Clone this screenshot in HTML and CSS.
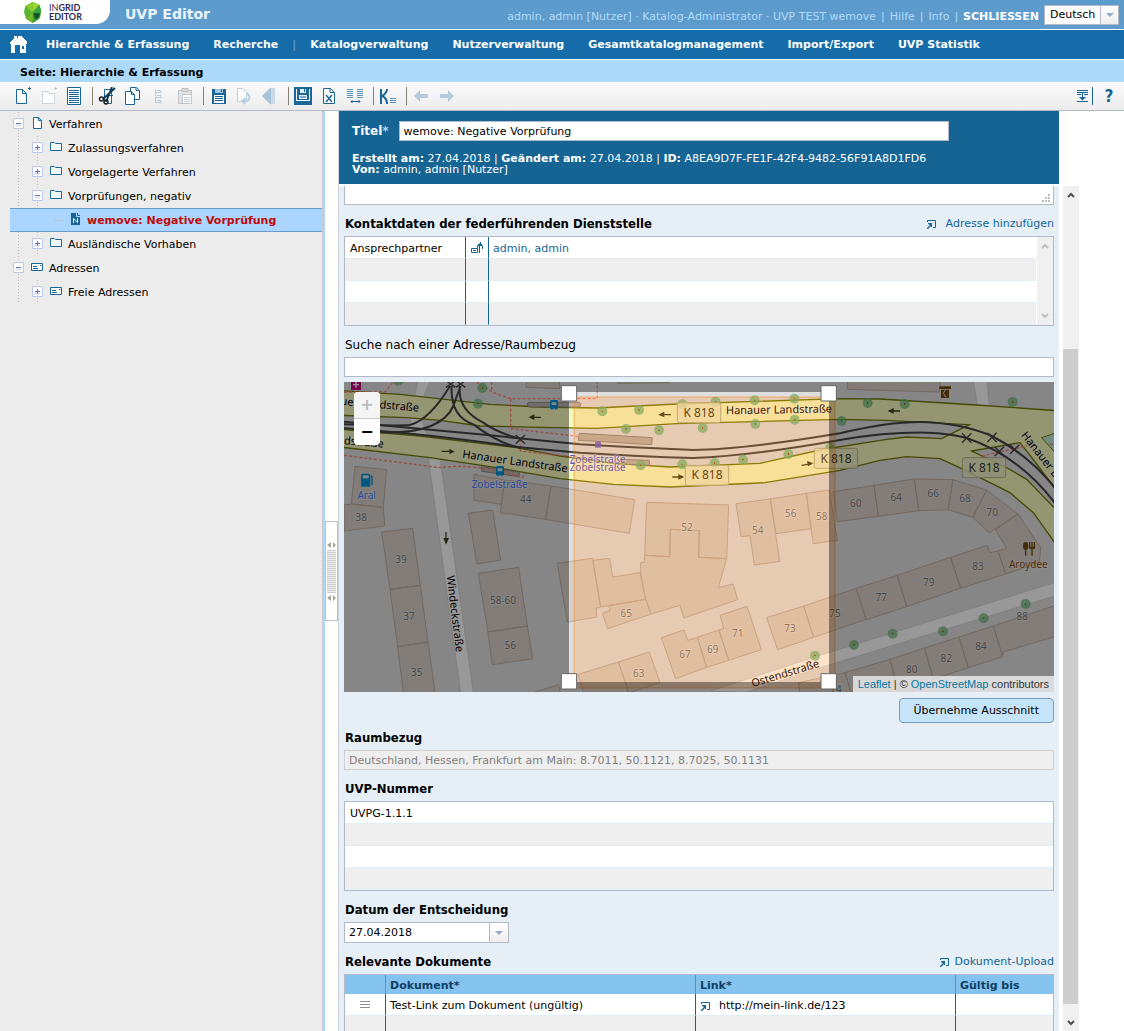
FILE: index.html
```html
<!DOCTYPE html>
<html lang="de">
<head>
<meta charset="utf-8">
<title>UVP Editor</title>
<meta name="viewport" content="width=device-width, initial-scale=1">
<link rel="stylesheet" href="styles.css">
</head>
<body>
<svg class="defs" aria-hidden="true">
  <symbol id="i-folder" viewBox="0 0 12 10"><path d="M.5 8.500v-8h4l1 1h6v7z" fill="#f3f6fa" stroke="#1a6699"/></symbol>
  <symbol id="i-card" viewBox="0 0 12 8"><path d="M.5.5h11v7h-11z" fill="#fff" stroke="#1a6699"/><path d="M2 3.500h4M2 5.500h5M9 2.500h1.500" stroke="#1a6699"/></symbol>
  <symbol id="i-popup" viewBox="0 0 10 10"><path d="M1.500 3V1.500h8v7H7" fill="none" stroke="#156494"/><path d="M2 4h4v4H5V7L2 10 .5 9.500 4 6 2 5z" fill="#156494"/></symbol>
  <symbol id="i-plus" viewBox="0 0 11 11"><path d="M.5.5h10v10H.5z" fill="#fff" stroke="#bcc8e0"/><path d="M2 6h7v3H2z" fill="#e6eaf4"/><path d="M3 5.500h5M5.500 3v5" stroke="#5b7fb5"/></symbol>
  <symbol id="i-minus" viewBox="0 0 11 11"><path d="M.5.5h10v10H.5z" fill="#fff" stroke="#bcc8e0"/><path d="M2 6h7v3H2z" fill="#e6eaf4"/><path d="M3 5.500h5" stroke="#5b7fb5"/></symbol>
  <symbol id="i-down" viewBox="0 0 8 4"><path d="M0 0h8L4 4z" fill="#93a9cc"/></symbol>
  <symbol id="i-up-arrow" viewBox="0 0 8 6"><path d="M1 5l3-3 3 3" fill="none" stroke="currentColor" stroke-width="2"/></symbol>
  <symbol id="i-down-arrow" viewBox="0 0 8 6"><path d="M1 1l3 3 3-3" fill="none" stroke="currentColor" stroke-width="2"/></symbol>
  <symbol id="i-split" viewBox="0 0 9 6"><path d="M4 0v6L0 3zM6 0v6l3-3z" fill="#a8a498"/></symbol>
</svg>

<header class="masthead">
  <a class="logo" href="#" aria-label="INGRID EDITOR">
    <svg width="17" height="21" viewBox="0 0 51 63" aria-hidden="true"><path d="M26 0L46 8 51 24 49 46 26 63 6 50 0 30 4 12z" fill="#5cb531"/><path d="M26 0L46 8 26 31z" fill="#9ed22c"/><path d="M4 12L26 0v31z" fill="#8bcb2e"/><path d="M46 8L51 24 50 34 26 31z" fill="#35a541"/><path d="M26 31h24l-4 20-20 12z" fill="#3a9a3c"/><path d="M6 50l20-19v32z" fill="#76b729"/><path d="M28 34h20l-5 14-9 3z" fill="#124f2c"/></svg>
    <span class="logo-text"><span>IN<b>GRID</b></span><b>EDITOR</b></span>
  </a>
  <h1>UVP Editor</h1>
  <div class="session">
    <span>admin, admin [Nutzer] · Katalog-Administrator · UVP TEST wemove</span>
    <span>|</span><a href="#">Hilfe</a><span>|</span><a href="#">Info</a><span>|</span><a class="close" href="#">SCHLIESSEN</a>
  </div>
  <div class="language">
    <select aria-label="Sprache"><option>Deutsch</option></select>
    <span class="arrow"><svg width="8" height="4"><use href="#i-down"/></svg></span>
  </div>
</header>

<nav class="mainnav">
  <a class="home" href="#" aria-label="Startseite"><svg width="18" height="19" viewBox="0 0 18 19" shape-rendering="crispEdges"><path fill="#fff" d="M4 1h3v2h1V1h4v1l5 5v2h-1v9h-4v-8H5v8H1V9H0V7l4-4z"/><path fill="#fff" d="M10 9h6v9h-6z"/><path fill="#156ca9" d="M12 11h2v3h-2z"/></svg></a>
  <a href="#">Hierarchie &amp; Erfassung</a>
  <a href="#">Recherche</a>
  <span class="bar">|</span>
  <a href="#">Katalogverwaltung</a>
  <a href="#">Nutzerverwaltung</a>
  <a href="#">Gesamtkatalogmanagement</a>
  <a href="#">Import/Export</a>
  <a href="#">UVP Statistik</a>
</nav>
<div class="crumb">Seite: Hierarchie &amp; Erfassung</div>

<div class="toolbar">
  <button aria-label="Neu"><svg width="18" height="18"><path d="M3.500 2.500h6l4 4v10h-10zM9.500 2.500v4h4" fill="#fff" stroke="#1a6699"/><path d="M16.500 0v3M15 1.500h3" stroke="#1a6699"/></svg></button>
  <button aria-label="Neuer Ordner" disabled><svg width="18" height="18"><path d="M3.500 4.500h6l1 2h5v10h-12z" fill="#fff" stroke="#c8d6e0"/><path d="M16.500 0v3M15 1.500h3" stroke="#b9cddd"/></svg></button>
  <button aria-label="Vorschau"><svg width="18" height="18"><path d="M2.500.5h13v17h-13z" fill="#fff" stroke="#1a6699"/><path d="M4 3.500h10M4 5.500h10M4 7.500h10M4 9.500h10M4 11.500h10M4 13.500h10M4 15.500h10" stroke="#1a6699"/></svg></button>
  <i class="sep"></i>
  <button aria-label="Ausschneiden"><svg width="18" height="18"><path d="M6.500 2.500h7v14h-7zM9 8.500h6" fill="#fff" stroke="#1a6699"/><path d="M17 1L5 12M14 0L8 15" stroke="#103c5c" stroke-width="2"/><circle cx="3.500" cy="12" r="2" fill="none" stroke="#222" stroke-width="1.500"/><circle cx="8" cy="15" r="2" fill="none" stroke="#222" stroke-width="1.500"/></svg></button>
  <button aria-label="Kopieren"><svg width="18" height="18"><path d="M6.500.5h6l3 3v9h-9z" fill="#fff" stroke="#1a6699"/><path d="M1.500 4.500h6l3 3v10h-9zM7.500 4.500v3h3M12 .5v3h3" fill="#fff" stroke="#1a6699"/></svg></button>
  <button aria-label="Teilbaum kopieren" disabled><svg width="18" height="18"><path d="M5.500 2v14M5.500 5.500h5M5.500 10.500h5M5.500 15.500h5M7 3.500h4v3M7 8.500h4v3M7 13.500h4v3" fill="none" stroke="#b9cddd"/></svg></button>
  <button aria-label="Einfügen" disabled><svg width="18" height="18"><path d="M2.500 3.500h13v13h-13z" fill="#e3e3e3" stroke="#c3c3c3"/><path d="M6 1.500h6v3H6z" fill="#ddd" stroke="#bbb"/><path d="M6.500 7.500h9v9h-9z" fill="#fff" stroke="#b9c7d2"/><path d="M8 10.500h6M8 12.500h6M8 14.500h6" stroke="#c3cfd8"/></svg></button>
  <i class="sep"></i>
  <button aria-label="Speichern"><svg width="18" height="18"><path d="M3 2h14v15H3z" fill="#1a6699"/><path d="M6 2h8v4H6z" fill="#9fc3dc"/><path d="M5 8h10v8H5z" fill="#fff"/><path d="M6 9.500h8M6 11.500h8M6 13.500h8M12.500 2v3" stroke="#1a6699"/></svg></button>
  <button aria-label="Wiederherstellen" disabled><svg width="18" height="18"><path d="M2.500 1.500h5l4 4v9h-9z" fill="#fff" stroke="#b9cddd"/><path d="M12 6q5 5 0 8H8M10.500 11L7 14l3.500 3" fill="none" stroke="#b9cddd" stroke-width="2"/></svg></button>
  <button aria-label="Rückgängig" disabled><svg width="18" height="18"><path d="M10 0v18L1 9z" fill="#a9c4d9"/><path d="M10 1h2v16h-2zM12 1h2v16h-2z" fill="#c9d9e6"/></svg></button>
  <i class="sep"></i>
  <button aria-label="Abschließen"><svg width="18" height="18"><path d="M0 0h18v18H0z" fill="#1a6699"/><path d="M2 2h14v12H2z" fill="#fff"/><path d="M3 2h12v11H3z" fill="#1a6699"/><path d="M6 2h6v4H6zM5 8h8v4H5z" fill="#e3edf4"/><path d="M10.500 2v3M6 10h6" stroke="#1a6699"/></svg></button>
  <button aria-label="Löschen"><svg width="18" height="18"><path d="M3.500 1.500h7l4 4v11h-11zM10 1.500v4h4" fill="#fff" stroke="#1a6699"/><path d="M6 8l6 7M12 8l-6 7" stroke="#1a6699" stroke-width="1.500"/></svg></button>
  <button aria-label="Vergleichen"><svg width="18" height="18"><path d="M1 2.500h6M1 4.500h6M1 6.500h6M1 8.500h6M1 10.500h6M11 2.500h6M11 4.500h6M11 6.500h6M11 8.500h6M11 10.500h6" stroke="#5b93b9"/><path d="M5 14.500h9M6.500 13L5 14.500 6.500 16M12.500 13l1.500 1.500-1.500 1.500" fill="none" stroke="#1a6699"/></svg></button>
  <i class="sep"></i>
  <button aria-label="Kommentar"><svg width="18" height="18"><path d="M2 2v15M8 2q0 4-5 7 5 2 5 8" fill="none" stroke="#1a6699" stroke-width="2"/><path d="M11 11.500h6M11 13.500h6M11 15.500h6" stroke="#5b93b9"/></svg></button>
  <i class="sep"></i>
  <button aria-label="Zurück" disabled><svg width="18" height="18"><path d="M2 9l6-6v4h8v4H8v4z" fill="#b4cbdc"/></svg></button>
  <button aria-label="Vorwärts" disabled><svg width="18" height="18"><path d="M16 9l-6-6v4H2v4h8v4z" fill="#b4cbdc"/></svg></button>
  <span class="toolbar-end">
    <button class="fold" aria-label="Alle einblenden"><svg width="12" height="12"><path d="M0 .5h11M0 2.500h11M0 4.500h4M7 4.500h4M0 11.500h11M5.500 3v6" stroke="#156494"/><path d="M2 7h7l-3.500 3.500z" fill="#156494"/></svg></button>
    <i class="sep blue"></i>
    <button class="help" aria-label="Hilfe">?</button>
  </span>
</div>

<div class="workspace">
  <aside class="tree">
    <ul>
      <li><div class="row"><svg class="toggle" width="11" height="11"><use href="#i-minus"/></svg><span class="ico"><svg width="9" height="12"><path d="M.5.5h5l3 3v8h-8zM5.500.5v3h3" fill="#fff" stroke="#1a6699"/></svg></span><a href="#">Verfahren</a></div>
        <ul>
          <li><div class="row"><svg class="toggle" width="11" height="11"><use href="#i-plus"/></svg><span class="ico"><svg width="12" height="10"><use href="#i-folder"/></svg></span><a href="#">Zulassungsverfahren</a></div></li>
          <li><div class="row"><svg class="toggle" width="11" height="11"><use href="#i-plus"/></svg><span class="ico"><svg width="12" height="10"><use href="#i-folder"/></svg></span><a href="#">Vorgelagerte Verfahren</a></div></li>
          <li><div class="row"><svg class="toggle" width="11" height="11"><use href="#i-minus"/></svg><span class="ico"><svg width="12" height="10"><use href="#i-folder"/></svg></span><a href="#">Vorprüfungen, negativ</a></div>
            <ul>
              <li><div class="row selected"><i class="stub"></i><span class="ico"><svg width="9" height="12"><path d="M0 0h5v4h4v8H0z" fill="#1a6699"/><path d="M6.500 0v2.500H9M1 2.500h3" stroke="#1a6699" fill="none"/><path d="M2.500 10V5.500l4 4V5" stroke="#fff" fill="none"/></svg></span><a href="#">wemove: Negative Vorprüfung</a></div></li>
            </ul>
          </li>
          <li><div class="row"><svg class="toggle" width="11" height="11"><use href="#i-plus"/></svg><span class="ico"><svg width="12" height="10"><use href="#i-folder"/></svg></span><a href="#">Ausländische Vorhaben</a></div></li>
        </ul>
      </li>
      <li><div class="row"><svg class="toggle" width="11" height="11"><use href="#i-minus"/></svg><span class="ico"><svg width="12" height="8"><use href="#i-card"/></svg></span><a href="#">Adressen</a></div>
        <ul>
          <li><div class="row"><svg class="toggle" width="11" height="11"><use href="#i-plus"/></svg><span class="ico"><svg width="12" height="8"><use href="#i-card"/></svg></span><a href="#">Freie Adressen</a></div></li>
        </ul>
      </li>
    </ul>
  </aside>
  <div class="splitter"><div class="grip"><svg width="9" height="6"><use href="#i-split"/></svg><i></i><svg width="9" height="6"><use href="#i-split"/></svg></div></div>

  <main class="editor">
    <div class="titlebox">
      <div class="titleline"><label for="titel">Titel<span>*</span></label><input id="titel" value="wemove: Negative Vorprüfung"></div>
      <p><b>Erstellt am:</b> 27.04.2018 | <b>Geändert am:</b> 27.04.2018 | <b>ID:</b> A8EA9D7F-FE1F-42F4-9482-56F91A8D1FD6<br><b>Von:</b> admin, admin [Nutzer]</p>
    </div>
    <div class="scrollarea">
      <div class="form">
        <div class="textarea-end"><textarea aria-label="Beschreibung"></textarea><svg width="8" height="8"><path d="M6 0h2v2H6zM3 3h2v2H3zM6 3h2v2H6zM0 6h2v2H0zM3 6h2v2H3zM6 6h2v2H6z" fill="#bdbdbd"/></svg></div>

        <section>
          <div class="head"><h2>Kontaktdaten der federführenden Dienststelle</h2><a class="action wide" href="#"><svg width="10" height="10"><use href="#i-popup"/></svg>Adresse hinzufügen</a></div>
          <div class="grid">
            <table class="lined contacts">
              <colgroup><col class="c-role"><col class="c-icon"><col></colgroup>
              <tr><td>Ansprechpartner</td><td class="icon"><svg width="13" height="12"><path d="M.5 6.500h6v4h-6zM8.500 11V1.500M6.500 7V3.500h5V7M7 2.500h4M9.500 0v3" fill="none" stroke="#156494"/><path d="M2 8.500h3" stroke="#156494"/></svg></td><td><a href="#">admin, admin</a></td></tr>
              <tr><td></td><td></td><td></td></tr><tr><td></td><td></td><td></td></tr><tr><td></td><td></td><td></td></tr>
            </table>
            <div class="minibar"><svg width="8" height="6"><use href="#i-up-arrow"/></svg><svg width="8" height="6"><use href="#i-down-arrow"/></svg></div>
          </div>
        </section>

        <section>
          <div class="head"><label class="plain" for="suche">Suche nach einer Adresse/Raumbezug</label></div>
          <input id="suche" class="text">
          <div class="map">
            <svg class="mapcanvas" viewBox="12 18 2130 930" preserveAspectRatio="xMidYMid slice">
              <defs><radialGradient id="tree"><stop offset="0" stop-color="#a85a10"/><stop offset=".12" stop-color="#a85a10"/><stop offset=".2" stop-color="#6cb878" stop-opacity=".75"/><stop offset="1" stop-color="#6cb878" stop-opacity=".75"/></radialGradient></defs>
              <rect x="12" y="18" width="2130" height="930" fill="#e0dfdf"/>
              <g class="bld">
                <path d="M45 271L140 281 130 394 34 384zM12 387L34 384 130 394 134 450 12 465zM125 468L218 457 241 628 150 640zM150 640L241 628 264 798 173 812zM173 812L264 798 285 950 190 950zM385 412L458 402 482 552 411 564zM415 592L536 574 562 750 444 768zM444 768L562 750 578 848 457 866zM494 312L633 330 617 430 481 410zM402 295L494 312 484 385 402 373zM633 330L884 371 868 472 617 430zM560 10H659V38L558 34zM580 950L655 926 662 950z"/>
                <path transform="translate(660)" d="M-8 562L98 547 122 693 108 697 110 723 22 738zM98 553L149 547 158 603 242 590 257 670 122 693zM147 689L257 670 273 714 143 758 127 712 150 703zM260 379L506 387 500 548 416 544 418 464 331 460 329 542 254 538zM254 538L329 542 331 460 418 464 416 544 500 548 475 635 519 624 533 671 371 726 360 688 273 714 257 670 242 600 242 560 253 559zM528 383L631 369 659 556 583 567 570 479 543 482zM631 369L739 352 753 458 648 473zM739 352L808 342 832 493 760 503zM304 785L372 762 383 793 412 784 440 874 347 908zM412 784L477 762 506 853 440 874zM480 718L561 691 604 821 506 853 477 762 491 757zM620 725L731 690 761 784 653 821zM731 690L889 637 918 730 761 784zM175 858L268 828 300 920 206 950zM55 895L175 858 206 950 70 950zM170 10H330L328 20 172 22z"/>
                <path transform="translate(1440)" d="M40 347L162 328 175 421 52 437zM162 328L283 309 296 404 175 421zM283 309L399 311 384 401 296 404zM399 311L500 342 458 424 384 401zM500 342L594 414 508 470 458 424zM594 414L662 515 658 560 557 594 534 525 560 516 526 461zM392 544L502 508 510 530 534 525 557 594 422 637zM232 598L392 544 422 637 260 692zM109 637L232 598 260 692 139 731zM520 750L710 687 710 780 550 828 548 842zM417 783L520 750 548 842 445 875zM313 816L417 783 445 875 340 910zM210 850L313 816 345 925 235 955zM75 890L210 850 240 955 95 955zM-65 920L75 890 95 955 -60 955zM82 10H362L358 48 82 40z"/>
              </g>
              <g fill="#fefefe" stroke="#c8c8c8" stroke-width="2">
                <path d="M265 244L300 246 400 950 362 950zM235 10H272L238 95 245 130 262 180 205 180 215 100zM1900 10H1940L1948 92 1912 88z"/>
                <path d="M2150 618L1440 838 1110 946 1220 948 1440 875 2150 658z"/>
              </g>
              <path class="road" fill-rule="evenodd" d="M0 44L180 55 450 85 600 93 770 96 1010 84 1500 68 1620 69 1910 87 2150 104V508L2080 410 2010 350 1870 280 1800 248 1700 242 1620 253 1500 283 1275 320 990 333 820 325 660 308 470 275 270 245 0 213zM0 118L200 125 300 133 420 150 600 154 770 157 1010 143 1500 130 1640 133 1888 146 1805 188 1700 183 1640 190 1440 222 1260 262 990 273 820 262 660 240 530 215 240 180 0 160zM1895 225L2040 200 2090 264 2150 345 2150 403 2060 310 2000 275z"/>
              <path d="M2105 185L2150 170V235z" fill="#c0ead8" stroke="#707d05" stroke-width="3"/>
              <g fill="#bcb4ac" stroke="#8f8880" stroke-width="3">
                <path d="M718 172L937 185 935 206 715 193zM840 250L928 253V268L860 265z"/><rect x="562" y="79" width="160" height="14" rx="7"/><path d="M425 272l112 16v14l-112-16z"/>
              </g>
              <g class="foot">
                <path d="M12 238Q200 262 300 275 400 260 548 305L555 290M12 48H135L160 18M410 18L460 50 512 68H772V18M512 68V158L720 182M455 18V45M1925 240L2060 210M2130 205H2142M541 190V225L720 245"/>
              </g>
              <g fill="none" stroke="#444" stroke-width="6">
                <path d="M12 137Q200 155 450 178L720 205Q900 216 1060 222 1200 222 1500 172 1640 138 1740 138 1860 140 1956 180 2070 240 2150 342M12 157Q250 172 530 213L720 230Q900 242 1060 246 1230 240 1500 192 1640 168 1760 170 1830 172 1880 186 2040 240 2150 388"/>
                <path d="M12 145Q170 150 210 147 270 130 330 30M100 168Q300 180 340 90 350 60 362 30M335 30Q330 120 400 145 480 205 541 215M360 30Q350 100 430 140 470 170 541 188"/>
                <path stroke-width="4" d="M527 177l28 26m0-26l-28 26M318 14l28 20m0-20l-28 20M348 14l28 20m0-20l-28 20M1866 172l28 28m0-28l-28 28M1942 170l28 28m0-28l-28 28M1964 212l28 28m0-28l-28 28M2010 206l28 28m0-28l-28 28"/>
              </g>
              <g fill="url(#tree)">
                <circle cx="427" cy="36" r="15"/><circle cx="414" cy="83" r="15"/><circle cx="175" cy="14" r="15"/><circle cx="787" cy="106" r="15"/><circle cx="897" cy="102" r="15"/><circle cx="858" cy="159" r="15"/><circle cx="957" cy="163" r="15"/><circle cx="1027" cy="85" r="15"/><circle cx="1127" cy="77" r="15"/><circle cx="1244" cy="73" r="15"/><circle cx="1363" cy="68" r="15"/><circle cx="1088" cy="156" r="15"/><circle cx="1246" cy="144" r="15"/><circle cx="1364" cy="131" r="15"/><circle cx="902" cy="268" r="15"/><circle cx="1027" cy="265" r="15"/><circle cx="1124" cy="261" r="15"/><circle cx="1209" cy="251" r="15"/><circle cx="1345" cy="234" r="15"/><circle cx="1470" cy="215" r="15"/><circle cx="1505" cy="135" r="15"/><circle cx="1583" cy="81" r="15"/><circle cx="1694" cy="84" r="15"/><circle cx="2018" cy="78" r="15"/><circle cx="1425" cy="839" r="15"/><circle cx="1542" cy="807" r="15"/><circle cx="1658" cy="773" r="15"/><circle cx="1809" cy="766" r="15"/><circle cx="1931" cy="727" r="15"/><circle cx="2057" cy="684" r="15"/>
              </g>
              <g fill="none" stroke="#404020" stroke-width="4"><path d="M305 226h34M570 124h33M318 468v32M959 116h34M997 303h32M1385 268l30-5M1648 105h32"/></g>
              <path fill="#404020" d="M344 227l-16-9v16zM566 124l17-9v17zM318 506l-8-20h17zM955 116l18-9v17zM1033 303l-18-9v17zM1420 262l-19-7 3 16zM1643 105l18-9v17z"/>
              <g class="shield"><rect x="1012" y="80" width="130" height="60" rx="6"/><rect x="1036" y="268" width="130" height="60" rx="6"/><rect x="1423" y="217" width="130" height="60" rx="6"/><rect x="1867" y="245" width="130" height="60" rx="6"/>
                <text x="1077" y="122">K 818</text><text x="1101" y="310">K 818</text><text x="1488" y="260">K 818</text><text x="1932" y="287">K 818</text></g>
              <g class="street">
                <text x="1158" y="115" transform="rotate(-1 1158 115)">Hanauer Landstraße</text>
                <text x="366" y="245" transform="rotate(8 366 245)">Hanauer Landstraße</text>
                <text x="236" y="107" text-anchor="end" transform="rotate(5 236 107)">Hanauer Landstraße</text>
                <text x="130" y="215" text-anchor="end" transform="rotate(5 130 215)">Hanauer Landstraße</text>
                <text x="320" y="600" transform="rotate(83 320 600)">Windeckstraße</text>
                <text x="1238" y="934" transform="rotate(-17 1238 934)">Ostendstraße</text>
                <text x="2042" y="178" transform="rotate(52 2042 178)">Hanauer Landstraße</text>
              </g>
              <g class="num">
                <text x="64" y="435">38</text><text x="183" y="560">39</text><text x="207" y="731">37</text><text x="230" y="899">35</text><text x="557" y="380">44</text><text x="489" y="683">58-60</text><text x="511" y="819">56</text>
                <text x="1041" y="465">52</text><text x="1253" y="473">54</text><text x="1352" y="423">56</text><text x="1445" y="433">58</text><text x="859" y="722">65</text><text x="1035" y="846">67</text><text x="1118" y="830">69</text><text x="1193" y="784">71</text><text x="1350" y="767">73</text><text x="1485" y="722">75</text><text x="896" y="902">63</text>
                <text x="1547" y="394">60</text><text x="1669" y="376">64</text><text x="1780" y="364">66</text><text x="1875" y="378">68</text><text x="1957" y="420">70</text><text x="1914" y="583">83</text><text x="1766" y="629">79</text><text x="1624" y="675">77</text><text x="2047" y="732">88</text><text x="1923" y="823">84</text><text x="1819" y="857">82</text><text x="1715" y="890">80</text><text x="1488" y="952">74</text>
              </g>
              <g class="poi">
                <text x="80" y="368">Aral</text><text x="479" y="336">Zobelstraße</text>
                <g fill="#5058c8"><text x="773" y="262">Zobelstraße</text><text x="773" y="285">Zobelstraße</text></g>
                <text x="2065" y="575" fill="#8a4a08">Aroydee</text>
              </g>
              <g fill="#0092da"><path d="M63 298q0-5 5-5h18q5 0 5 5v34H63zM93 298l5 3v26h-4v-20"/><path d="M68 298h18v9H68z" fill="#e0dfdf"/><path d="M471 270h17q4 0 4 4v24h-5v3h-4v-3h-7v3h-4v-3h-4v-24zM633 72h17q4 0 4 4v22h-5v3h-4v-3h-7v3h-4v-3h-4v-22z"/><path d="M473 277h14v9h-14zM635 79h14v8h-14z" fill="#e0dfdf"/></g>
              <path d="M33 12h30v30H33z" fill="#c40086"/><path d="M48 17v18M39 26h18" stroke="#fff" stroke-width="4"/>
              <path d="M765 197h18v18h-18z" fill="#6a55c4" opacity=".8"/>
              <g fill="#734a08"><ellipse cx="2057" cy="510" rx="8" ry="12"/><path d="M2055 515h4v24h-4zM2074 515h4v24h-4zM2067 498h4v14h3v-14h4v14h3v-14h4v20h-18zM1798 31h35v8h-35zM1803 41h24v25h-24z"/></g><path d="M1817 40l-7 12 8 12" fill="none" stroke="#e0dfdf" stroke-width="3"/>
              <rect x="702" y="63" width="783" height="873" fill="#ff7800" fill-opacity=".2" stroke="#ff7800" stroke-opacity=".5" stroke-width="3"/>
              <path fill-rule="evenodd" fill-opacity=".4" d="M12 18H2142V948H12zM687 48V918H1467V48z"/>
              <g fill="#fff" stroke="#666" stroke-width="3"><path d="M664 29h46v46h-46zM1443 29h46v46h-46zM664 893h46v46h-46zM1443 893h46v46h-46z"/></g>
            </svg>
            <div class="zoom"><button disabled aria-label="Vergrößern">+</button><button aria-label="Verkleinern">−</button></div>
            <div class="attribution"><a href="#">Leaflet</a> | © <a href="#">OpenStreetMap</a> contributors</div>
          </div>
          <div class="buttons"><button class="primary">Übernehme Ausschnitt</button></div>
        </section>

        <section class="tight">
          <div class="head"><label for="raumbezug">Raumbezug</label></div>
          <input id="raumbezug" class="text" disabled value="Deutschland, Hessen, Frankfurt am Main: 8.7011, 50.1121, 8.7025, 50.1131">
        </section>

        <section>
          <div class="head"><h2>UVP-Nummer</h2></div>
          <div class="grid"><table><tr><td>UVPG-1.1.1</td></tr><tr><td></td></tr><tr><td></td></tr><tr><td></td></tr></table></div>
        </section>

        <section>
          <div class="head"><label for="datum">Datum der Entscheidung</label></div>
          <div class="date"><input id="datum" value="27.04.2018"><button class="arrow" aria-label="Kalender öffnen"><svg width="8" height="4"><use href="#i-down"/></svg></button></div>
        </section>

        <section>
          <div class="head"><h2>Relevante Dokumente</h2><a class="action" href="#"><svg width="10" height="10"><use href="#i-popup"/></svg>Dokument-Upload</a></div>
          <div class="grid">
            <table class="lined docs">
              <colgroup><col class="c-handle"><col><col class="c-link"><col class="c-valid"></colgroup>
              <thead><tr><th></th><th>Dokument*</th><th>Link*</th><th>Gültig bis</th></tr></thead>
              <tbody>
                <tr><td class="icon"><svg width="10" height="8"><path d="M0 .5h10M0 3.500h10M0 6.500h10" stroke="#8c8c8c"/></svg></td><td>Test-Link zum Dokument (ungültig)</td><td><span class="link"><svg width="10" height="10"><use href="#i-popup"/></svg>http://mein-link.de/123</span></td><td></td></tr>
                <tr><td></td><td></td><td></td><td></td></tr><tr><td></td><td></td><td></td><td></td></tr><tr><td></td><td></td><td></td><td></td></tr>
              </tbody>
            </table>
          </div>
        </section>
      </div>
      <div class="scrollbar"><svg width="8" height="6"><use href="#i-up-arrow"/></svg><div class="track"><i></i></div><svg width="8" height="6"><use href="#i-down-arrow"/></svg></div>
    </div>
  </main>
</div>
</body>
</html>
```
FILE: styles.css
```css
* { box-sizing: border-box; }
html, body { height: 100%; }
body {
  margin: 0;
  display: flex;
  flex-direction: column;
  overflow: hidden;
  background: #fff;
  color: #000;
  font: 11px/16px "DejaVu Sans", sans-serif;
}
.defs { position: absolute; width: 0; height: 0; }
svg { display: block; flex: none; }
a { color: inherit; text-decoration: none; }
h1, h2, p, ul { margin: 0; padding: 0; }
button, input, select, textarea { font: inherit; color: inherit; margin: 0; border-radius: 0; }
button { display: flex; align-items: center; justify-content: center; padding: 0; border: 0; background: none; }

/* masthead */
.masthead { flex: none; display: flex; align-items: flex-start; height: 29px; background: #5e9bcd; padding-right: 5px; }
.logo { display: flex; align-items: center; gap: 8px; width: 110px; height: 24px; padding-left: 24px; background: #fff; border-bottom-right-radius: 14px; }
.logo-text { display: flex; flex-direction: column; font: 9px/9px Lato, sans-serif; color: #2b2a55; }
.masthead h1 { margin-left: 15px; font-size: 14px; line-height: 28px; color: #e9f4fc; flex: 1; }
.session { display: flex; gap: 5px; line-height: 33px; color: #aedcfb; margin-right: 5px; white-space: nowrap; }
.session .close { color: #fff; font-weight: bold; }
.language { position: relative; margin-top: 5px; width: 75px; height: 20px; }
.language select { width: 100%; height: 100%; appearance: none; background: #fff; border: 1px solid #b4b9c8; padding: 0 0 0 5px; }
.arrow { display: flex; align-items: center; justify-content: center; width: 19px; background: linear-gradient(#fff, #eee); border: 1px solid #b4b9c8; }
.language .arrow { position: absolute; right: 0; top: 0; height: 100%; pointer-events: none; }

.mainnav { flex: none; display: flex; align-items: center; gap: 24px; height: 31px; padding-left: 10px; background: #156ca9; border: solid #fff; border-width: 1px 0; color: #fff; font-weight: bold; line-height: 18px; white-space: nowrap; }
.mainnav .home { margin-right: -6px; }
.mainnav .bar { margin: 0 -10px; color: #5e9bcd; }
.mainnav a:not(.home) { padding-top: 1px; }
.crumb { flex: none; height: 22px; padding-left: 20px; line-height: 26px; background: #acd9f8; font-weight: bold; }

.toolbar { flex: none; display: flex; align-items: center; gap: 2px; height: 29px; padding: 0 3px 0 10px; background: linear-gradient(#fbfbfb, #ececec); border-bottom: 1px solid #b4b9c8; }
.toolbar button { width: 24px; height: 24px; }
.sep { width: 5px; height: 18px; border-right: 1px solid #85827a; }
.sep.blue { border-right: 0; border-left: 1px solid #156494; }
.toolbar-end { display: flex; align-items: center; margin-left: auto; }
.toolbar .fold { width: 18px; }
.toolbar .help { color: #156494; font: bold 17px/20px "DejaVu Sans Condensed", "DejaVu Sans", sans-serif; }

/* tree */
.workspace { flex: 1; min-height: 0; display: flex; }
.tree { flex: none; width: 323px; padding: 1px 0 0 10px; background: #ececec; border-right: 1px solid #c8c8d0; }
.tree ul { list-style: none; }
.row { display: flex; align-items: center; height: 24px; padding-left: 3px; }
.row a { padding-top: 1px; }
.toggle, .row .ico { margin-bottom: 2px; }
.tree ul ul .row { padding-left: 22px; }
.tree ul ul ul .row { padding-left: 40px; }
.tree > ul { background: repeating-linear-gradient(#bbb 0 1px, transparent 1px 3px) 8px 0 / 1px 100% no-repeat; }
.tree > ul > li > ul { background: repeating-linear-gradient(#bbb 0 1px, transparent 1px 3px) 27px 0 / 1px 100% no-repeat; }
.ico { width: 12px; margin: 0 6px 0 7px; display: flex; justify-content: center; }
.stub { width: 8px; height: 1px; margin: 0 3px 0 5px; border-top: 1px dotted #bbb; }
.stub + .ico { margin-left: 3px; }
.selected { background: #aad5ff; border: solid #6a9ccb; border-width: 1px 0; color: #c00a0a; font-weight: bold; }

.splitter { flex: none; width: 16px; display: flex; align-items: center; background: #fff; border-left: 2px solid #acd9f8; border-right: 1px solid #cfd2d8; }
.grip { width: 100%; height: 100px; display: flex; flex-direction: column; align-items: center; gap: 2px; padding-top: 20px; border: 1px solid #bfc0c4; }
.grip i { width: 9px; height: 43px; background: repeating-linear-gradient(#ccc 0 1px, #eee 1px 2px); }

/* editor */
.editor { flex: 1; min-width: 0; display: flex; flex-direction: column; gap: 2px; }
.titlebox { flex: none; height: 73px; margin-right: 65px; padding: 10px 13px 0; background: #156494; color: #fff; }
.titleline { display: flex; align-items: center; gap: 10px; }
.titleline label { font-weight: bold; font-size: 12px; }
.titleline label span { color: #acd9f8; }
.titleline input { flex: 0 1 550px; min-width: 0; height: 20px; padding: 0 4px; border: 1px solid #b4b9c8; background: #fff; color: #000; }
.titlebox p { margin-top: 12px; line-height: 11px; }
.scrollarea { flex: 1; min-height: 0; display: flex; gap: 4px; padding-right: 45px; }
.form { flex: 1; min-width: 0; overflow: hidden; padding: 0 5px; background: #e6eff6; }

.textarea-end { position: relative; height: 19px; }
.textarea-end textarea { display: block; width: 100%; height: 100%; resize: none; border: 1px solid #b4b9c8; border-top: 0; background: #fff; }
.textarea-end svg { position: absolute; right: 4px; bottom: 3px; }
section { margin-top: 10px; }
section.tight { margin-top: 6px; }
.head { display: flex; justify-content: space-between; align-items: flex-start; height: 21px; padding-left: 1px; line-height: 16px; }
.head h2, .head label { font: bold 13px/18px "DejaVu Sans Condensed", "DejaVu Sans", sans-serif; }
.head .plain { font: 12px/18px "DejaVu Sans", sans-serif; }
.action { display: flex; align-items: center; gap: 6px; color: #156494; line-height: 18px; }
.action.wide { gap: 10px; }
.text { display: block; width: 100%; height: 20px; padding: 0 4px; border: 1px solid #b4b9c8; background: #fff; }
.text:disabled { background: #eee; border-color: #cfcfcf; color: #808080; }

.grid { display: flex; border: 1px solid #b4b9c8; background: #fff; }
table { flex: 1; width: 100%; table-layout: fixed; border-spacing: 0; }
td { height: 22px; padding: 3px 5px 0; border-bottom: 1px solid #e0eef5; line-height: 16px; white-space: nowrap; }
tr:nth-child(even) td { background: #efefef; }
.lined th, .lined td { border-right: 1px solid #156494; }
.lined tr > :last-child { border-right: 0; }
td.icon { padding: 0; }
td.icon svg { margin: 0 auto; }
.contacts a { color: #156494; }
.contacts td:last-child { padding-left: 4px; }
.c-role { width: 121px; }
.c-icon { width: 23px; }
.c-handle { width: 41px; }
.c-link { width: 260px; }
.c-valid { width: 97px; }
.docs th { height: 19px; padding: 3px 4px 0; background: #84c3ee; border-color: #6c84e8; color: #0e3f63; text-align: left; line-height: 16px; }
.docs td { padding-left: 4px; }
.docs td.icon { padding: 0; }
.link { display: flex; align-items: center; gap: 9px; }
.minibar { width: 17px; display: flex; flex-direction: column; justify-content: space-between; align-items: center; padding: 6px 0; background: #f0f0f0; border-left: 1px solid #fff; color: #bfbfbf; }

/* map */
.map { position: relative; margin-top: 5px; height: 310px; overflow: hidden; }
.mapcanvas { width: 100%; height: 100%; font-family: "Noto Sans", sans-serif; }
.bld { fill: #d9d0c9; stroke: #bfae9f; stroke-width: 3; }
.road { fill: #f7fabf; stroke: #707d05; stroke-width: 4; }
.foot { fill: none; stroke: #ff8070; stroke-width: 4; stroke-dasharray: 9 6; }
.shield rect { fill: #eeeec8; fill-opacity: .8; stroke: #b8b488; stroke-width: 3; }
.shield text { font-size: 36px; text-anchor: middle; fill: #3c3c20; }
.street { font-size: 33px; fill: #000; }
.num { font-size: 30px; fill: #747474; text-anchor: middle; }
.num text, .street text, .poi text { paint-order: stroke; stroke: #fff; stroke-opacity: .4; stroke-width: 5; }
.poi { font-size: 30px; fill: #3d7eff; text-anchor: middle; }
.zoom { position: absolute; left: 10px; top: 10px; width: 26px; border-radius: 4px; overflow: hidden; background: #fff; }
.zoom button { width: 26px; height: 26px; font: bold 16px/26px "DejaVu Sans", sans-serif; }
.zoom button:disabled { height: 27px; background: #f4f4f4; color: #bbb; border-bottom: 1px solid #ccc; }
.attribution { position: absolute; right: 0; bottom: 0; padding: 0 5px; background: rgba(255, 255, 255, .7); color: #333; font: 11px/16px "Liberation Sans", sans-serif; white-space: nowrap; }
.attribution a { color: #0078a8; }

.buttons { display: flex; justify-content: flex-end; padding-top: 6px; }
.primary { height: 25px; padding: 0 14px; border: 1px solid #769dc0; border-radius: 4px; background: #c5e4f7; }
.date { display: flex; width: 165px; height: 21px; }
.date input { flex: 1; min-width: 0; padding: 0 4px; border: 1px solid #b4b9c8; background: #fff; }
.date .arrow { width: 19px; border-left: 0; }

.scrollbar { flex: none; width: 16px; display: flex; flex-direction: column; align-items: center; padding: 6px 0 5px; gap: 5px; background: #f0f0f0; color: #505050; }
.track { flex: 1; width: 100%; display: flex; flex-direction: column; }
.track::before { content: ""; flex: 146; }
.track i { flex: 654; margin-right: 1px; background: #cdcdcd; }
.track::after { content: ""; flex: 11; }
```
